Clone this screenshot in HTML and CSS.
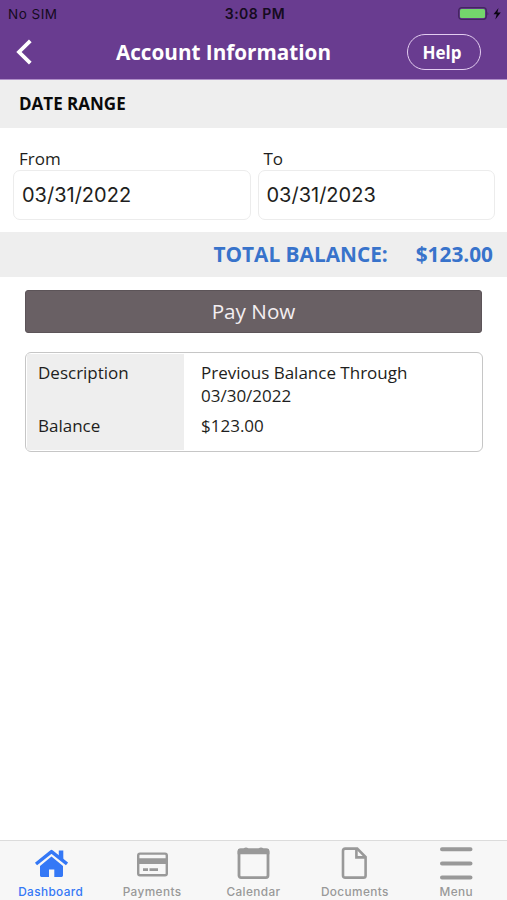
FILE: index.html
```html
<!DOCTYPE html>
<html lang="en">
<head>
    <meta charset="UTF-8">
    <meta name="viewport" content="width=device-width, initial-scale=1.0">
    <title>Account Information</title>
    <link rel="stylesheet" href="styles.css">
</head>
<body>
    <!-- Header Section -->
    <header>
        <div class="status">
            <span class="carrier">No SIM</span>
            <span class="time">3:08 PM</span>
            <svg class="battery" width="44" height="14" viewBox="0 0 44 14">
                <rect x="0.7" y="0.7" width="27.6" height="11.6" rx="3" fill="none" stroke="#43265f" stroke-width="1.3"/>
                <rect x="2" y="2" width="25" height="9" rx="1.5" fill="#74d66c"/>
                <path d="M29.5 4.5 Q31 6.5 29.5 8.5 Z" fill="#43265f"/>
                <path d="M40.5 1 L35.5 7.3 H38.7 L37.3 12.5 L42.8 5.5 H39.4 Z" fill="#0c0612"/>
            </svg>
        </div>
        <div class="nav">
            <a href="#" class="back" aria-label="Back">
                <svg width="16" height="26" viewBox="0 0 16 26">
                    <path d="M14.3 1.8 L3 13 L14.3 24.2" fill="none" stroke="#fff" stroke-width="3.8"/>
                </svg>
            </a>
            <h1>Account Information</h1>
            <button type="button" class="help">Help</button>
        </div>
    </header>

    <!-- Main Content Section -->
    <main>
        <h2>DATE RANGE</h2>
        <form class="dates">
            <div class="field">
                <label for="from">From</label>
                <input type="text" id="from" value="03/31/2022">
            </div>
            <div class="field">
                <label for="to">To</label>
                <input type="text" id="to" value="03/31/2023">
            </div>
        </form>

        <div class="total">
            <span>TOTAL BALANCE:</span>
            <span>$123.00</span>
        </div>

        <button type="button" class="pay">Pay Now</button>

        <dl class="card">
            <dt>Description</dt>
            <dd>Previous Balance Through 03/30/2022</dd>
            <dt>Balance</dt>
            <dd>$123.00</dd>
        </dl>
    </main>

    <!-- Tab Bar -->
    <footer>
        <a href="#" class="tab active">
            <svg width="34" height="34" viewBox="0 0 34 34">
                <path d="M2 18 L17.5 5.6 L33 18" fill="none" stroke="currentColor" stroke-width="3.4" stroke-linejoin="round"/>
                <path d="M24.8 4.5 H29.3 V14.5 L24.8 11 Z" fill="currentColor"/>
                <path d="M17.5 10.5 L29 20 V29.6 Q29 31 27.6 31 H20.3 V23.6 H15 V31 H7.4 Q6 31 6 29.6 V20 Z" fill="currentColor"/>
            </svg>
            <span>Dashboard</span>
        </a>
        <a href="#" class="tab">
            <svg width="34" height="34" viewBox="0 0 34 34">
                <rect x="3.2" y="7.6" width="28.6" height="21.6" rx="1.8" fill="none" stroke="currentColor" stroke-width="2.4"/>
                <path d="M3 12.3 H32 V18 H3 Z M8 22.2 H13 V25 H8 Z M14.5 22.2 H23 V25 H14.5 Z" fill="currentColor"/>
            </svg>
            <span>Payments</span>
        </a>
        <a href="#" class="tab">
            <svg width="34" height="34" viewBox="0 0 34 34">
                <rect x="3" y="3.8" width="29" height="27.8" rx="2" fill="none" stroke="currentColor" stroke-width="2.8"/>
                <path d="M1.6 5 Q1.6 2.6 4 2.6 H7.5 Q10 0.2 12.5 2.6 H22.5 Q25 0.2 27.5 2.6 H31 Q33.4 2.6 33.4 5 V8.2 H1.6 Z" fill="currentColor"/>
            </svg>
            <span>Calendar</span>
        </a>
        <a href="#" class="tab">
            <svg width="34" height="34" viewBox="0 0 34 34">
                <path d="M7.2 2.6 H19.2 L27.6 11 V29.4 Q27.6 31.6 25.4 31.6 H7.2 Q5 31.6 5 29.4 V4.8 Q5 2.6 7.2 2.6 Z" fill="none" stroke="currentColor" stroke-width="2.6"/>
                <path d="M18.4 3 V11.4 H27.4" fill="none" stroke="currentColor" stroke-width="2.6"/>
            </svg>
            <span>Documents</span>
        </a>
        <a href="#" class="tab">
            <svg width="34" height="34" viewBox="0 0 34 34">
                <path d="M3 3.2 H31.5 M3 17.4 H31.5 M3 31.6 H31.5" stroke="currentColor" stroke-width="4" stroke-linecap="round"/>
            </svg>
            <span>Menu</span>
        </a>
    </footer>
</body>
</html>
```
FILE: styles.css
```css
* {
    box-sizing: border-box;
}

body {
    display: flex;
    flex-direction: column;
    height: 100vh;
    margin: 0;
    font-family: "Open Sans", sans-serif;
    color: #1e1e20;
    background: #fff;
    overflow: hidden;
}

header {
    height: 80px;
    background: #693c90;
    border-bottom: 1px solid #b08fc9;
}

.status {
    display: grid;
    grid-template-columns: 1fr auto 1fr;
    align-items: center;
    height: 27px;
    padding: 0 5px 0 8px;
    font-family: Inter, sans-serif;
    font-size: 13.5px;
    letter-spacing: 0.5px;
    color: #150b20;
}

.time {
    font-size: 14px;
    font-weight: 600;
    letter-spacing: 0.5px;
}

.battery {
    justify-self: end;
}

.nav {
    display: grid;
    grid-template-columns: 40px 1fr 100px;
    align-items: center;
    height: 50px;
    color: #fff;
}

.back {
    display: flex;
    padding-left: 16px;
}

h1 {
    margin: 0;
    font-size: 20.7px;
    font-weight: 700;
    text-align: center;
    white-space: nowrap;
}

.help {
    width: 74px;
    height: 36px;
    padding: 0 4px 0 0;
    font-family: inherit;
    font-size: 17px;
    font-weight: 700;
    color: #fff;
    background: none;
    border: 1.5px solid #e3cdf0;
    border-radius: 18px;
}

h2 {
    margin: 0;
    padding-left: 19px;
    font-size: 17px;
    font-weight: 700;
    line-height: 47px;
    height: 48px;
    color: #0a0a0a;
    background: #eee;
}

.dates {
    display: flex;
    gap: 7px;
    height: 104px;
    padding: 20px 12px 0 13px;
}

.field {
    flex: 1;
    min-width: 0;
}

label {
    display: block;
    padding-left: 6px;
    font-size: 17px;
    line-height: 21px;
    height: 22px;
}

input {
    width: 100%;
    height: 50px;
    padding: 0 8px;
    font-family: Inter, sans-serif;
    font-size: 20px;
    color: #1e1e20;
    background: #fff;
    border: 1px solid #ececec;
    border-radius: 7px;
}

.total {
    display: flex;
    justify-content: flex-end;
    gap: 28px;
    padding-right: 14px;
    font-size: 20.8px;
    font-weight: 700;
    line-height: 45px;
    color: #3873cb;
    background: #eee;
}

.pay {
    display: block;
    width: 457px;
    height: 43px;
    margin: 13px 25px 19px;
    padding: 0 0 2px;
    font-family: inherit;
    font-size: 20.7px;
    color: #f3eef1;
    background: #696064;
    border: 1px solid #5c5458;
    border-radius: 3px;
}

.card {
    display: grid;
    grid-template-columns: 157px 1fr;
    grid-template-rows: 54px 1fr;
    width: 458px;
    height: 100px;
    margin: 0 25px;
    padding: 1px;
    font-size: 17px;
    line-height: 23px;
    border: 1px solid #c6c6c6;
    border-radius: 6px;
}

dt {
    padding: 7px 11px 0;
    background: #eee;
}

dd {
    margin: 0;
    padding: 7px 50px 0 17px;
}

.card dt:nth-of-type(2),
.card dd:nth-of-type(2) {
    padding-top: 6px;
}

footer {
    display: grid;
    grid-template-columns: repeat(5, 1fr);
    height: 60px;
    margin-top: auto;
    background: #f7f7f7;
    border-top: 1px solid #dcdcdc;
}

.tab {
    display: flex;
    flex-direction: column;
    align-items: center;
    padding-top: 5px;
    font-family: Inter, sans-serif;
    font-size: 11.8px;
    font-weight: 500;
    line-height: 16px;
    letter-spacing: 0.4px;
    color: #999;
    text-decoration: none;
}

.tab span {
    margin-top: 4px;
}

.active {
    color: #3478f6;
}
```
